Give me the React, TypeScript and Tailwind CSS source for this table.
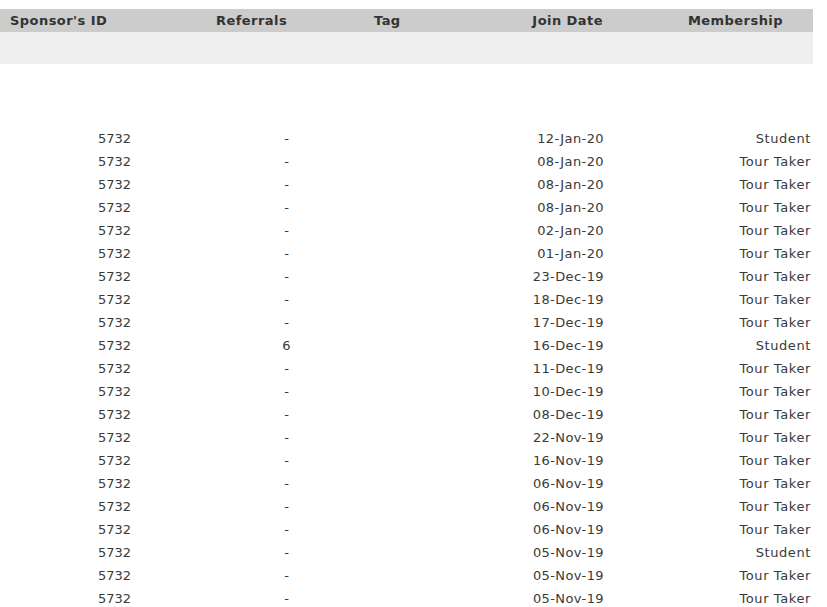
const rows: { referrals: string; date: string; membership: string }[] = [
  { referrals: "-", date: "12-Jan-20", membership: "Student" },
  { referrals: "-", date: "08-Jan-20", membership: "Tour Taker" },
  { referrals: "-", date: "08-Jan-20", membership: "Tour Taker" },
  { referrals: "-", date: "08-Jan-20", membership: "Tour Taker" },
  { referrals: "-", date: "02-Jan-20", membership: "Tour Taker" },
  { referrals: "-", date: "01-Jan-20", membership: "Tour Taker" },
  { referrals: "-", date: "23-Dec-19", membership: "Tour Taker" },
  { referrals: "-", date: "18-Dec-19", membership: "Tour Taker" },
  { referrals: "-", date: "17-Dec-19", membership: "Tour Taker" },
  { referrals: "6", date: "16-Dec-19", membership: "Student" },
  { referrals: "-", date: "11-Dec-19", membership: "Tour Taker" },
  { referrals: "-", date: "10-Dec-19", membership: "Tour Taker" },
  { referrals: "-", date: "08-Dec-19", membership: "Tour Taker" },
  { referrals: "-", date: "22-Nov-19", membership: "Tour Taker" },
  { referrals: "-", date: "16-Nov-19", membership: "Tour Taker" },
  { referrals: "-", date: "06-Nov-19", membership: "Tour Taker" },
  { referrals: "-", date: "06-Nov-19", membership: "Tour Taker" },
  { referrals: "-", date: "06-Nov-19", membership: "Tour Taker" },
  { referrals: "-", date: "05-Nov-19", membership: "Student" },
  { referrals: "-", date: "05-Nov-19", membership: "Tour Taker" },
  { referrals: "-", date: "05-Nov-19", membership: "Tour Taker" },
];

export default function App() {
  return (
    <div className="h-[607px] w-[827px] overflow-hidden bg-white pt-[9px] font-['DejaVu_Sans',Verdana,sans-serif] text-[13px] text-[#333]">
      {/* header bar + empty filter band */}
      <div className="w-[813px]">
        <div className="grid h-[23px] grid-cols-[216px_158px_100px_129px_180px] items-center bg-[#cccccc] pr-[30px] font-bold leading-none tracking-[0.45px]">
          <div className="pl-[10px]">Sponsor's ID</div>
          <div>Referrals</div>
          <div>Tag</div>
          <div className="text-right">Join Date</div>
          <div className="text-right">Membership</div>
        </div>
        <div className="h-[32px] bg-[#eeeeee]" />
      </div>

      <div className="mt-[63px]">
        {rows.map((r, i) => (
          <div key={i} className="grid h-[23px] grid-cols-[131px_311px_162px_207px] items-center leading-none text-[#3a3a3a]">
            <div className="text-right">5732</div>
            <div className="text-center">{r.referrals}</div>
            <div className="text-right tracking-[0.4px]">{r.date}</div>
            <div className="text-right tracking-[0.6px]">{r.membership}</div>
          </div>
        ))}
      </div>
    </div>
  );
}
